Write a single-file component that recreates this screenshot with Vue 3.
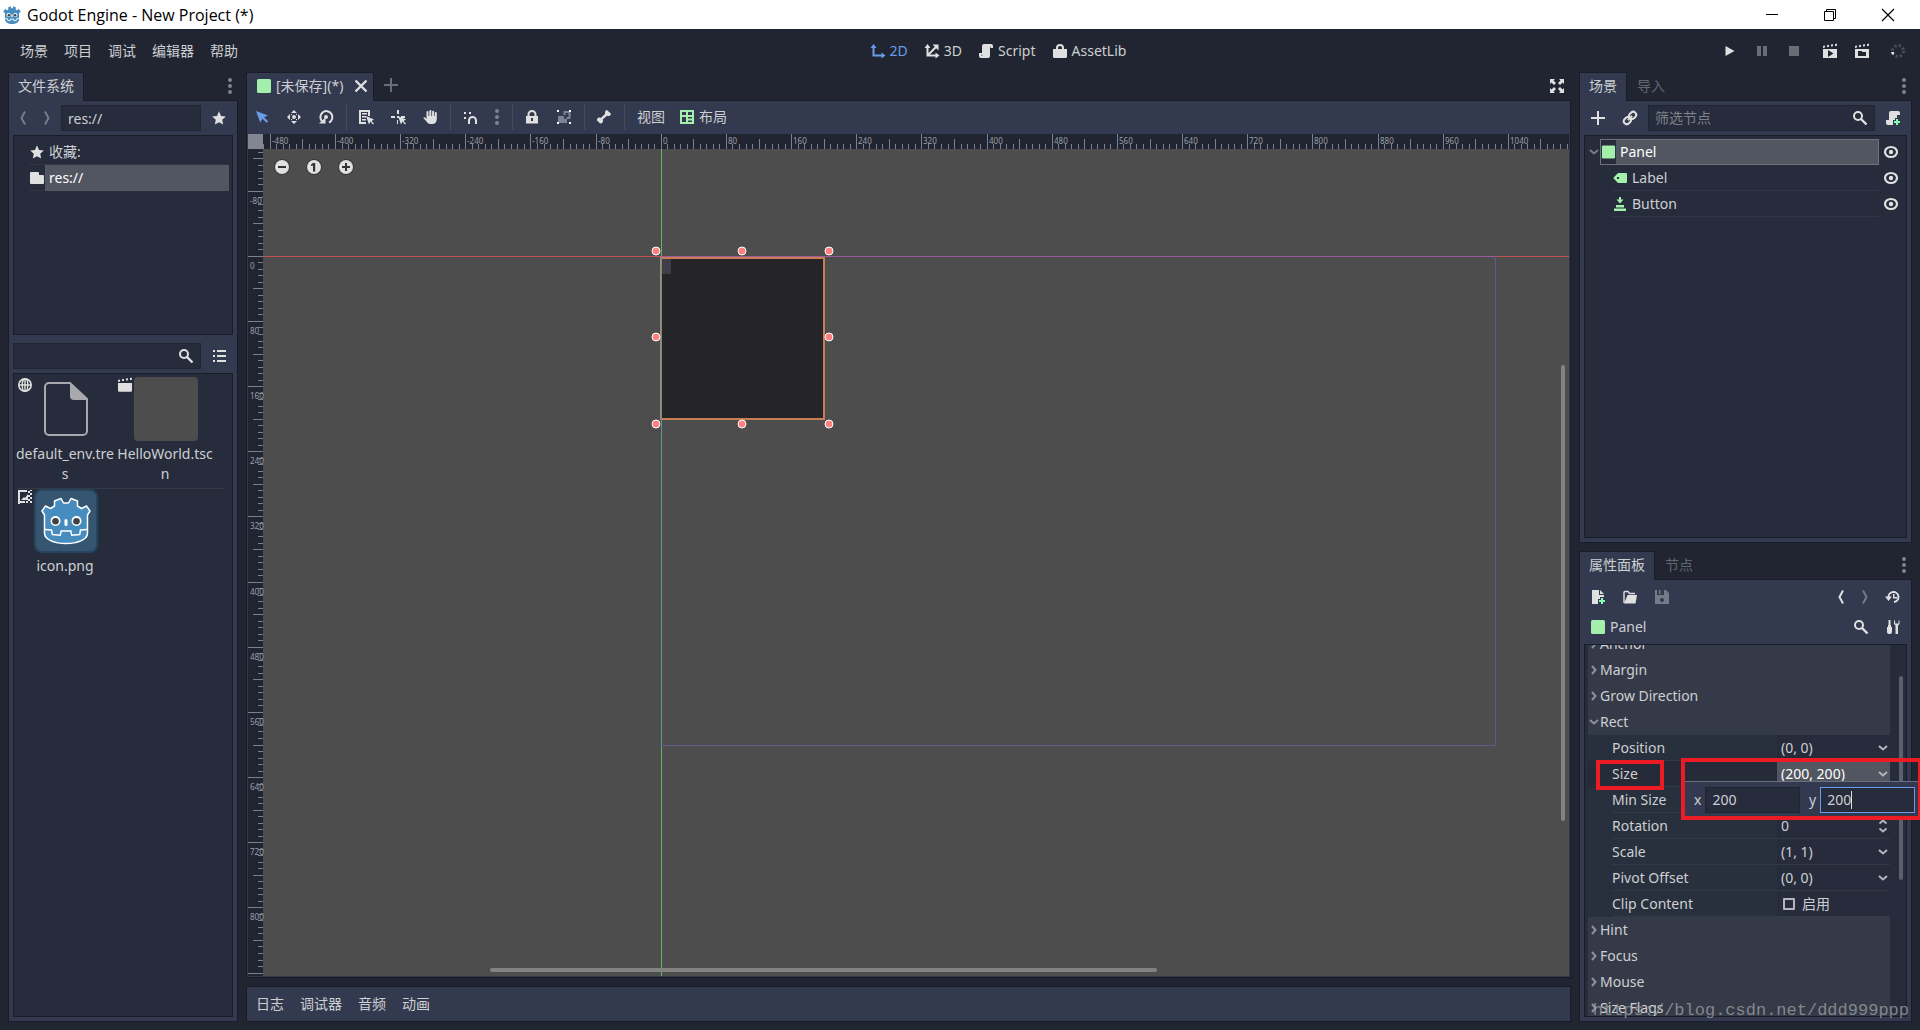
<script setup>
import { h, ref } from 'vue'

const L = (d, w = 2, c = 'currentColor') =>
  `<path d="${d}" fill="none" stroke="${c}" stroke-width="${w}"/>`
const F = (d, c = 'currentColor') => `<path d="${d}" fill="${c}"/>`

const cursor = 'M8 7l3 8.500 1.500-3 2.500 3 1-1-2.500-2.500 2.500-1.500z'
const clap = 'M1 3l2-.4v2L1 5zm4-.8l2-.4v2L5 4.200zm4-.6l2-.3v2L9 3.500zm4-.6l2-.2v2l-2 .2z'

const glyphs = {
  robot: `<g transform="scale(.25)"><path d="M9.500 44V26L4 21l6-8 6.500 4 3.500-2.500V7L28 4l2 6h4L36 4l8 3v7.500l3.500 2.500 6.500-4 6 8-5.500 5v20c0 9-11 15-22.500 15S9.500 55 9.500 44z" fill="#478cbf"/><circle cx="21" cy="32" r="6.500" fill="#fff"/><circle cx="43" cy="32" r="6.500" fill="#fff"/><circle cx="22" cy="33" r="4" fill="#414042"/><circle cx="42" cy="33" r="4" fill="#414042"/><path d="M30 30h4v8h-4z" fill="#fff"/><path d="M10 43l7 1 1 5 8 1 1-5h10l1 5 8-1 1-5 7-1" fill="none" stroke="#fff" stroke-width="3"/></g>`,
  panel: '<rect x="1" y="1" width="14" height="14" rx="1.500" fill="#a5efac"/>',
  close: L('M2.500 2.500l11 11M13.500 2.500l-11 11', 2.4),
  plus: L('M8 1v14M1 8h14', 2),
  prev: L('M10 1.500L6.500 8l3.500 6.500'),
  next: L('M6 1.500L9.500 8 6 14.500'),
  star: F('M8 1.300l2 4.600 4.800.5-3.600 3.300 1 4.900L8 12.200l-4.200 2.400 1-4.900L1.200 6.400 6 5.900z'),
  folder: F('M2 2a1 1 0 0 0-1 1v10a1 1 0 0 0 1 1h12a1 1 0 0 0 1-1V6a1 1 0 0 0-1-1h-4V3a1 1 0 0 0-1-1z'),
  search: '<circle cx="6" cy="6" r="4" fill="none" stroke="currentColor" stroke-width="2"/>' + L('M9 9l5.500 5.500', 2.4),
  list: F('M2 2h2v2H2zm4 0h9v2H6zM2 7h2v2H2zm4 0h9v2H6zM2 12h2v2H2zm4 0h9v2H6z'),
  globe: '<circle cx="8" cy="8" r="6.200" fill="none" stroke="currentColor" stroke-width="1.600"/><ellipse cx="8" cy="8" rx="2.800" ry="6.200" fill="none" stroke="currentColor" stroke-width="1.400"/>' + L('M2 8h12M8 2v12', 1.4),
  scene: F(clap) + F('M1 6h14v7.500a1.200 1.200 0 0 1-1.200 1.200H2.200A1.200 1.200 0 0 1 1 13.500z'),
  image: F('M1 1h9v2H3v9h5v2h-5v1H1zM4 11l3-3 1 1 3-4v6zM11 2h2v2h-2zM13 4h2v2h-2zM11 6h2v2h-2zM13 8h2v2h-2zM11 10h2v2h-2zM9 12h2v2H9zM13 12h2v2h-2zM13 1h2v1h-2z'),
  select: F('M2 2l4.200 11.500 2.300-3.700 4 4 1.600-1.600-4-4L14 6.500z', '#699ce8'),
  move: '<circle cx="8" cy="8" r="2" fill="currentColor"/>' + F('M8 1l3 3H5zM8 15l3-3H5zM1 8l3-3v6zM15 8l-3-3v6zM5 5h1v1H5zM10 5h1v1h-1zM5 10h1v1H5zM10 10h1v1h-1z'),
  rotate: L('M4.300 12.500A6 6 0 1 1 11 13.500') + '<circle cx="8" cy="8" r="2" fill="currentColor"/>' + F('M1 14.500h6.500V8.500z'),
  listselect: F('M1 1h11v6h-2V3H3v10h5v2H1zM4 4h5v1.500H4zM4 7h4v1.500H4zM4 10h4v1.500H4z') + F(cursor),
  pivot: F('M7 1h2v4H7zM1 7h4v2H1zM11 7h4v2h-4zM7 11h1v4H7zM7 7h2v2H7z') + F(cursor),
  hand: F('M4.500 3a1 1 0 0 1 2 0v4h.8V2a1 1 0 0 1 2 0v5h.8V2.700a1 1 0 0 1 2 0V7h.7V4a1 1 0 0 1 2 0v6c0 3-1.800 5-4.500 5H8.500c-2 0-2.800-.8-4-2.500L1.300 9c.8-1 1.800-.8 2.400 0l.8.8z'),
  snap: F('M2 3h2v2H2zM7 3h2v2H7zM2 8h2v2H2z') + L('M7 15v-3.500a3.500 3.500 0 0 1 7 0V15', 2),
  lock: F('M3.500 7V5.500a4.500 4.500 0 0 1 9 0V7H14v7.500H2V7zm2 0h5V5.500a2.500 2.500 0 0 0-5 0zM7 9v3h2V9z'),
  group: F('M2 7h6v3h3v4H2z', '#7d8392') + L('M8.500 6V3h5v6h-3', 2, '#7d8392') + F('M1 1h2v2H1zM13 1h2v2h-2zM1 13h2v2H1zM13 13h2v2h-2z', '#fff'),
  bone: F('M10 1.500c1.200-.8 2.600 0 2.700 1.400 1.800.2 2.800 2 1.700 3.300-1 1-2.400 1-3.400.5L6.700 10.500c.6 1.400.2 2.800-.8 3.600-1.300 1-2.800.2-3-1.400-1.600-.2-2.500-1.700-1.700-3 .8-1.200 2.300-1.400 3.600-.8L9.200 4.700c-.5-1.300-.2-2.500.8-3.200z'),
  layout: F('M1 1h14v14H1zm2 2v3h4V3zm6 0v3h4V3zM3 8v5h4V8zm6 0v1.500h4V8zm0 3.500V13h4v-1.500z', '#a5efac'),
  d2: L('M3.500 4v8.500H12') + F('M3.500 1l3 4h-6zM15.500 12.500l-4 3v-6z'),
  d3: L('M3.500 4v8.500H12M3.500 12.500l9-9') + F('M3.500 1l3 4h-6zM15.500 12.500l-4 3v-6zM14.500 1.500v6l-6-6z'),
  script: F('M6 1a2 2 0 0 0-2 2v7H1v3a2 2 0 0 0 2 2h7a2 2 0 0 0 2-2V5h3V3a2 2 0 0 0-2-2z') + F('M12 3.500h1V5h-1zM3 11.500h1.500V13H3z', '#8e9096'),
  asset: F('M4 6V5a4 4 0 0 1 8 0v1h3v7.500a1.500 1.500 0 0 1-1.500 1.500h-11A1.500 1.500 0 0 1 1 13.500V6zm2 0h4V5a2 2 0 0 0-4 0z'),
  play: F('M3.500 3l9 5-9 5z'),
  pause: F('M3 3h4v10H3zM9 3h4v10H9z'),
  stop: F('M3 3h10v10H3z'),
  playscene: F(clap) + F('M1 6h14v9H1zm5 1v7l5.500-3.500z'),
  playcustom: F(clap) + F('M1 6h14v9H1zm3 2v5h8V9H8V8z'),
  spinner: '<circle cx="8" cy="8" r="5.500" fill="none" stroke="#484c56" stroke-width="3" stroke-dasharray="2.300 2.020"/>' + F('M1 9h3v2.500H2z', '#e0e0e0'),
  expand: F('M1 1h5L4.500 2.500 7 5 5 7 2.500 4.500 1 6zM15 1v5l-1.500-1.500L11 7 9 5l2.500-2.500L10 1zM1 15v-5l1.500 1.500L5 9l2 2-2.500 2.500L6 15zM15 15h-5l1.500-1.500L9 11l2-2 2.500 2.500L15 10z'),
  link: '<g transform="rotate(-45 8 8)" fill="none" stroke="currentColor" stroke-width="2"><rect x="0.500" y="5" width="7.500" height="6" rx="3"/><rect x="8" y="5" width="7.500" height="6" rx="3"/><path d="M5 8h6"/></g>',
  scriptadd: F('M6 1a2 2 0 0 0-2 2v7H1v3a2 2 0 0 0 2 2h5v-5h2V8h2V5h3V3a2 2 0 0 0-2-2z') + F('M11 9h2v2h2v2h-2v2h-2v-2H9v-2h2z', '#84ffb1'),
  label: F('M6 3L1.200 8 6 13h8a1 1 0 0 0 1-1V4a1 1 0 0 0-1-1zm-1 4h2v2H5z', '#a5efac'),
  button: F('M7 1h2v2.500h2.500L8 7.500 4.500 3.500H7zM4 9h8v2.500H4zM2 12.500h12V15H2z', '#a5efac'),
  eye: '<ellipse cx="8" cy="8" rx="6" ry="5" fill="none" stroke="currentColor" stroke-width="2.200"/><circle cx="8" cy="8" r="2.200" fill="currentColor"/>',
  newres: F('M2 1h7v5h5v2h-4v2H8v5H2zM10 1l4 4h-4z') + F('M11 9h2v2h2v2h-2v2h-2v-2H9v-2h2z', '#84ffb1'),
  load: L('M2 14V3.500A1 1 0 0 1 3 2.500h3l1.500 2H13', 1.4) + F('M5.500 6H15l-1.500 8.500H2z'),
  save: F('M1 1h2v5h7V1h2l3 3v11H1zm4 0h1.500v4H5zm3 8a2 2 0 1 0 .01 0z'),
  history: L('M3.500 8.500A5 5 0 1 1 9 13', 2) + F('M0 7.500h7L3.500 12zM8 5h1.500v3H12v1.500H8z'),
  tools: F('M3.500 1h2v5h-2zM2 8h5v5a2 2 0 0 1-2 2H4a2 2 0 0 1-2-2zM3 6h3v2H3zM9 1.500v3.500l1.500 1.500V15h2.500V6.500L14.500 5V1.500h-1V4.500h-3.400V1.500z'),
  down: L('M4 6l4 3.500L12 6'),
  right: L('M6 4l3.500 4L6 12'),
  updown: L('M4.500 5.500L8 2.500l3.500 3M4.500 10.500l3.500 3 3.500-3'),
  min: L('M2 7.500h12', 1),
  restore: L('M2.500 4.500h9v9h-9zM4.500 4.500v-2h9v9h-2', 1),
  wclose: L('M2 2l12 12M14 2L2 14', 1.2),
  dots: '<circle cx="8" cy="2" r="2" fill="currentColor"/><circle cx="8" cy="8" r="2" fill="currentColor"/><circle cx="8" cy="14" r="2" fill="currentColor"/>',
  zminus: F('M4 7h8v2H4z', '#333'),
  zone: F('M7 4h2.200v8.500H7V6.500L5 7V5.500z', '#333'),
  zplus: F('M7 4h2v3h3v2H9v3H7V9H4V7h3z', '#333'),
}

const Icon = (p) =>
  h('svg', { class: 'ico', viewBox: '0 0 16 16', 'aria-hidden': 'true', innerHTML: glyphs[p.n] })
Icon.props = ['n']

const menus = ['场景', '项目', '调试', '编辑器', '帮助']
const modes = [['d2', '2D'], ['d3', '3D'], ['script', 'Script'], ['asset', 'AssetLib']]
const bottomTabs = ['日志', '调试器', '音频', '动画']
const tools = ['select', 'move', 'rotate', '|', 'listselect', 'pivot', 'hand', '|', 'snap', 'dots', '|', 'lock', 'group', '|', 'bone', '|']

const path = ref('res://')
const sizeX = ref('200')
const sizeY = ref('200')

/* Ruler geometry: one scene unit is `zoom` pixels, the origin sits at (ox, oy). */
const zoom = 0.8145
const ox = 413.3
const oy = 122.3
const makeTicks = (o, to) => {
  const out = []
  for (let u = -800; u <= to; u += 8) {
    const p = Math.floor(o + u * zoom)
    if (p >= 15) out.push({ u, p, len: u % 80 === 0 ? 15 : u % 40 === 0 ? 10 : 5 })
  }
  return out
}
const hTicks = makeTicks(ox, 1112)
const vTicks = makeTicks(oy, 880)
const major = (t, to) => t.filter((k) => k.u % 80 === 0 && k.u <= to)
const handles = [[408, 117], [494, 117], [581, 117], [408, 203], [581, 203], [408, 290], [494, 290], [581, 290]]

const rows = [
  { s: 'Anchor' }, { s: 'Margin' }, { s: 'Grow Direction' }, { s: 'Rect', open: true },
  { k: 'Position', v: '(0, 0)', i: 'down' }, { k: 'Size', v: '(200, 200)', i: 'down', on: true },
  { k: 'Min Size', v: '', i: 'down' }, { k: 'Rotation', v: '0', i: 'updown' },
  { k: 'Scale', v: '(1, 1)', i: 'down' }, { k: 'Pivot Offset', v: '(0, 0)', i: 'down' },
  { k: 'Clip Content', check: true },
  { s: 'Hint' }, { s: 'Focus' }, { s: 'Mouse' }, { s: 'Size Flags' },
]
</script>

<template>
  <div class="app">
    <header class="title">
      <Icon n="robot" class="logo" />
      <span class="caption">Godot Engine - New Project (*)</span>
      <button class="win" aria-label="Minimize"><Icon n="min" /></button>
      <button class="win" aria-label="Restore"><Icon n="restore" /></button>
      <button class="win" aria-label="Close"><Icon n="wclose" /></button>
    </header>

    <nav class="menubar">
      <div class="menus"><button v-for="m in menus" :key="m">{{ m }}</button></div>
      <div class="modes">
        <button v-for="(m, i) in modes" :key="m[1]" :class="{ blue: i === 0 }"><Icon :n="m[0]" />{{ m[1] }}</button>
      </div>
      <div class="run">
        <button aria-label="Play"><Icon n="play" /></button>
        <button class="dim" aria-label="Pause"><Icon n="pause" /></button>
        <button class="dim" aria-label="Stop"><Icon n="stop" /></button>
        <button class="wide" aria-label="Play scene"><Icon n="playscene" /></button>
        <button aria-label="Play custom scene"><Icon n="playcustom" /></button>
        <span class="spin"><Icon n="spinner" /></span>
      </div>
    </nav>

    <main class="body">
      <aside class="dock left">
        <div class="tabs">
          <button class="tab on">文件系统</button>
          <button class="more" aria-label="Dock options"><Icon n="dots" /></button>
        </div>
        <div class="panel">
          <div class="row">
            <button class="slim dim" aria-label="Back"><Icon n="prev" /></button>
            <button class="slim dim" aria-label="Forward"><Icon n="next" /></button>
            <input v-model="path" class="field grow" aria-label="Path" />
            <button class="tool" aria-label="Favorite"><Icon n="star" /></button>
          </div>
          <ul class="box fstree">
            <li><Icon n="star" /><span>收藏:</span></li>
            <li class="sel"><Icon n="folder" /><span>res://</span></li>
          </ul>
          <div class="row after">
            <label class="field grow find"><input aria-label="Search files" /><Icon n="search" /></label>
            <button class="tool" aria-label="List view"><Icon n="list" /></button>
          </div>
          <div class="box files">
            <div class="frow">
              <figure>
                <Icon n="globe" class="kind" />
                <svg class="thumb" viewBox="0 0 64 64"><path d="M36 6H15a4 4 0 0 0-4 4v44a4 4 0 0 0 4 4h34a4 4 0 0 0 4-4V22z" fill="none" stroke="#a8a9ae" stroke-width="2" /><path d="M36 6l18 17H40a4 4 0 0 1-4-4z" fill="#a8a9ae" /></svg>
                <figcaption>default_env.tres</figcaption>
              </figure>
              <figure>
                <Icon n="scene" class="kind" />
                <div class="thumb grey"></div>
                <figcaption>HelloWorld.tscn</figcaption>
              </figure>
            </div>
            <div class="frow">
              <figure>
                <Icon n="image" class="kind" />
                <svg class="thumb" viewBox="0 0 64 64">
                  <rect x="1" y="1" width="62" height="62" rx="7" fill="#355570" stroke="#25465e" stroke-width="2" />
                  <path d="M10.500 44V26L8 22l3.500-5 5 2.500 4-2.500v-5L27 9.500l2.500 4.500h5L37 9.500l6.500 2.500v5l4 2.500 5-2.500 3.500 5-2.500 4v18c0 7-10.500 10.500-21.500 10.500S10.500 51 10.500 44z" fill="#478cbf" stroke="#fff" stroke-width="1.500" stroke-linejoin="round" />
                  <circle cx="21.500" cy="32" r="5" fill="#fff" /><circle cx="42.500" cy="32" r="5" fill="#fff" />
                  <circle cx="21.500" cy="32.300" r="3.300" fill="#414042" /><circle cx="42.500" cy="32.300" r="3.300" fill="#414042" />
                  <rect x="30.500" y="30" width="3" height="7" rx="1.500" fill="#fff" />
                  <path d="M10.500 40.500l7 .5.800 4.500 8 .8.800-4.300h9.800l.8 4.300 8-.8.800-4.500 7-.5" fill="none" stroke="#fff" stroke-width="1.500" />
                </svg>
                <figcaption>icon.png</figcaption>
              </figure>
            </div>
          </div>
        </div>
      </aside>

      <section class="center">
        <div class="tabs">
          <div class="tab on file"><Icon n="panel" /><span>[未保存](*)</span><button aria-label="Close tab"><Icon n="close" /></button></div>
          <button class="addtab" aria-label="New scene"><Icon n="plus" /></button>
          <button class="full" aria-label="Distraction free"><Icon n="expand" /></button>
        </div>
        <div class="panel stage">
          <div class="toolbar">
            <template v-for="(t, i) in tools" :key="i">
              <i v-if="t === '|'" class="sep"></i>
              <button v-else :aria-label="t" :class="['tool', { narrow: t === 'dots' }]"><Icon :n="t" /></button>
            </template>
            <button class="text">视图</button>
            <button class="text lay"><Icon n="layout" />布局</button>
          </div>
          <div class="view">
            <svg class="canvas">
              <rect x="15" y="15" width="100%" height="100%" fill="#4d4d4d" />
              <rect width="15" height="15" fill="#828690" />
              <g fill="#7b808b">
                <rect v-for="t in hTicks" :key="'h' + t.u" :x="t.p" :y="15 - t.len" width="1" :height="t.len" />
                <rect v-for="t in vTicks" :key="'v' + t.u" :x="15 - t.len" :y="t.p" :width="t.len" height="1" />
              </g>
              <g class="nums">
                <text v-for="t in major(hTicks, 1040)" :key="'h' + t.u" :x="t.p + 2" y="10">{{ t.u }}</text>
                <text v-for="t in major(vTicks, 800)" :key="'v' + t.u" x="2" :y="t.p + 13">{{ t.u }}</text>
              </g>
              <rect x="413" y="123" width="163" height="163" fill="#252429" />
              <rect x="413" y="123" width="10" height="17" fill="#3f3d48" />
              <rect x="15" y="122" width="100%" height="1" fill="#bd5353" />
              <rect x="413" y="15" width="1" height="100%" fill="#62b562" />
              <rect x="413" y="122" width="834" height="1" fill="#a05a9c" />
              <rect x="1247" y="122" width="1" height="489" fill="#5d5a8e" />
              <rect x="413" y="611" width="835" height="1" fill="#5d5a8e" />
              <rect x="413" y="124" width="163" height="161" fill="none" stroke="#c87d54" stroke-width="2" />
              <rect x="413" y="123" width="1" height="488" fill="#5f959c" />
              <circle v-for="(p, i) in handles" :key="i" :cx="p[0]" :cy="p[1]" r="4" fill="#ff8080" stroke="#fff" stroke-width="1" />
            </svg>
            <div class="zoom">
              <button aria-label="Zoom out"><Icon n="zminus" /></button>
              <button aria-label="Zoom reset"><Icon n="zone" /></button>
              <button aria-label="Zoom in"><Icon n="zplus" /></button>
            </div>
            <i class="bar v"></i><i class="bar h"></i>
          </div>
        </div>
        <div class="panel bottom"><button v-for="b in bottomTabs" :key="b">{{ b }}</button></div>
      </section>

      <aside class="right">
        <div class="dock">
          <div class="tabs">
            <button class="tab on">场景</button><button class="tab">导入</button>
            <button class="more" aria-label="Dock options"><Icon n="dots" /></button>
          </div>
          <div class="panel">
            <div class="row">
              <button class="tool" aria-label="Add node"><Icon n="plus" /></button>
              <button class="tool" aria-label="Instance scene"><Icon n="link" /></button>
              <label class="field grow find"><input placeholder="筛选节点" aria-label="Filter nodes" /><Icon n="search" /></label>
              <button class="tool" aria-label="Attach script"><Icon n="scriptadd" /></button>
            </div>
            <ul class="box nodes">
              <li class="root"><Icon n="down" class="chev" /><div class="sel"><Icon n="panel" /><span>Panel</span></div><Icon n="eye" class="eye" /></li>
              <li><div class="kid"><Icon n="label" /><span>Label</span></div><Icon n="eye" class="eye" /></li>
              <li><div class="kid"><Icon n="button" /><span>Button</span></div><Icon n="eye" class="eye" /></li>
            </ul>
          </div>
        </div>

        <div class="dock insp">
          <div class="tabs">
            <button class="tab on">属性面板</button><button class="tab">节点</button>
            <button class="more" aria-label="Dock options"><Icon n="dots" /></button>
          </div>
          <div class="panel">
            <div class="row">
              <button class="tool" aria-label="New resource"><Icon n="newres" /></button>
              <button class="tool" aria-label="Load resource"><Icon n="load" /></button>
              <button class="tool dim" aria-label="Save resource"><Icon n="save" /></button>
              <span class="grow"></span>
              <button class="slim" aria-label="Previous"><Icon n="prev" /></button>
              <button class="slim dim" aria-label="Next"><Icon n="next" /></button>
              <button class="tool" aria-label="History"><Icon n="history" /></button>
            </div>
            <div class="row object">
              <Icon n="panel" /><span class="grow">Panel</span>
              <button class="tool" aria-label="Search properties"><Icon n="search" /></button>
              <button class="tool" aria-label="Object tools"><Icon n="tools" /></button>
            </div>
            <div class="box props">
              <div class="list">
                <template v-for="r in rows" :key="r.s || r.k">
                  <button v-if="r.s" class="section"><Icon :n="r.open ? 'down' : 'right'" />{{ r.s }}</button>
                  <div v-else :class="['prop', { hot: r.on }]">
                    <span class="key">{{ r.k }}</span>
                    <label v-if="r.check" class="val check"><input type="checkbox" />启用</label>
                    <button v-else class="val"><span>{{ r.v }}</span><Icon :n="r.i" /></button>
                  </div>
                </template>
              </div>
              <i class="thumbbar"></i>
            </div>
          </div>
          <div class="popup">
            <label>x<input v-model="sizeX" class="field" /></label>
            <label>y<span class="field focus"><input v-model="sizeY" :size="3" /><i class="caret"></i></span></label>
          </div>
          <i class="mark name"></i>
          <i class="mark value"></i>
        </div>
      </aside>
    </main>
    <span class="credit">https://blog.csdn.net/ddd999ppp</span>
  </div>
</template>

<style>
body { background: #202531; overflow: hidden; }
</style>

<style scoped>
.app {
  position: relative; display: flex; flex-direction: column; height: 100vh; overflow: hidden;
  background: #202531; color: #cdcfd2; font: 14px/20px "Noto Sans", "Noto Sans CJK SC", sans-serif;
}
.app * { box-sizing: border-box; }
button { display: flex; align-items: center; justify-content: center; margin: 0; padding: 0; border: 0; background: none; color: inherit; font: inherit; white-space: nowrap; }
input { margin: 0; font: inherit; color: inherit; outline: 0; }
ul { margin: 0; padding: 0; list-style: none; }
.ico { width: 16px; height: 16px; flex: none; display: block; color: #e0e0e0; }
.dim .ico { color: #757b89; }
.grow { flex: 1; min-width: 0; }

.title { display: flex; align-items: center; height: 29px; padding-right: 3px; background: #fff; color: #000; }
.logo { width: 20px; height: 20px; margin-left: 2px; }
.caption { flex: 1; padding-left: 5px; font: 16px/24px "Open Sans", sans-serif; }
.win { width: 58px; height: 29px; }
.win .ico { color: #000; }

.menubar { display: flex; align-items: center; height: 43px; padding: 0 8px 0 12px; }
.menus { display: flex; }
.menus button { padding: 0 8px; }
.modes { flex: 1; display: flex; justify-content: center; gap: 16px; padding-left: 34px; }
.modes button { gap: 4px; }
.modes .blue, .modes .blue .ico { color: #699ce8; }
.run { display: flex; align-items: center; gap: 4px; }
.run button { width: 28px; height: 28px; }
.run .wide { margin-left: 4px; }
.run .dim .ico { color: #6a6d75; }
.spin { padding: 0 6px; margin-left: 4px; }

.body { flex: 1; min-height: 0; display: flex; gap: 8px; padding: 0 8px 8px; }
.dock { display: flex; flex-direction: column; min-height: 0; }
.left { width: 230px; }
.center { flex: 1; min-width: 0; display: flex; flex-direction: column; }
.right { width: 333px; display: flex; flex-direction: column; gap: 8px; }
.right .dock { flex: 1; }

.tabs { display: flex; height: 28px; flex: none; }
.tab { height: 29px; padding: 0 9px 2px; border: 1px solid transparent; border-bottom: 0; color: #62666f; position: relative; }
.tab.on { background: #333a4f; border-color: #191d27; color: #cdcfd2; }
.more { margin-left: auto; width: 16px; }
.more .ico, .narrow .ico { color: #7f848e; }
.file { display: flex; align-items: center; gap: 4px; padding: 0 4px 2px 9px; }
.file button { margin-left: 6px; }
.addtab { width: 34px; padding-bottom: 2px; }
.addtab .ico { color: #6b6e74; }
.full { margin-left: auto; width: 28px; }

.panel { flex: 1; min-height: 0; display: flex; flex-direction: column; gap: 4px; padding: 4px; background: #333a4f; border: 1px solid #191d27; }
.row { display: flex; align-items: center; gap: 4px; height: 26px; flex: none; }
.after { margin-top: 4px; }
.tool { width: 28px; height: 26px; }
.slim { width: 20px; height: 26px; }
.narrow { width: 18px; }
.field { height: 26px; padding: 0 6px; border: 1px solid #202531; background: #262c3b; }
.find { display: flex; align-items: center; }
.find input { flex: 1; min-width: 0; border: 0; background: none; padding: 0; }
.find input::placeholder { color: #7c808a; opacity: 1; }
.box { background: #262c3b; border: 1px solid #191d27; }

.fstree { height: 200px; padding: 3px 3px 3px 15px; }
.fstree li { display: flex; align-items: center; height: 26px; border-bottom: 1px solid #303646; }
.fstree span { flex: 1; padding-left: 4px; line-height: 26px; margin-bottom: -1px; }
.fstree .sel span { background: #525661; color: #fff; }

.files { flex: 1; min-height: 0; padding: 3px 7px 3px 3px; }
.frow { display: flex; gap: 4px; }
.frow + .frow { border-top: 1px solid #343946; }
figure { position: relative; width: 96px; height: 111px; margin: 0; display: flex; flex-direction: column; }
figcaption { margin: 3px -2px 0; text-align: center; word-break: break-all; }
.kind { position: absolute; left: 0; top: 0; }
.thumb { width: 64px; height: 64px; flex: none; margin-left: 17px; }
.grey { background: #4d4d4d; border-radius: 4px; }

.stage { gap: 0; padding: 0 1px 1px; }
.toolbar { display: flex; align-items: center; gap: 4px; height: 33px; padding-bottom: 2px; flex: none; }
.sep { width: 4px; height: 26px; display: flex; justify-content: center; }
.sep::before { content: ""; width: 1px; background: #464c5e; }
.text { padding: 0 7px; }
.lay { gap: 4px; padding: 0 3px; }
.view { position: relative; flex: 1; min-height: 0; }
.canvas { position: absolute; inset: 0; width: 100%; height: 100%; background: #202531; overflow: hidden; }
.nums { font-size: 8px; fill: #9b9fa7; }
.zoom { position: absolute; left: 27px; top: 26px; display: flex; gap: 18px; }
.zoom button { width: 14px; height: 14px; border-radius: 50%; background: #e0e0e0; box-shadow: 0 0 0 1px #383838; }
.bar { position: absolute; background: #828282; border-radius: 2px; }
.bar.v { right: 4px; top: 231px; bottom: 155px; width: 4px; }
.bar.h { left: 242px; right: 412px; bottom: 4px; height: 4px; }
.bottom { flex: none; flex-direction: row; align-items: center; gap: 0; height: 36px; margin-top: 8px; padding: 0 1px; }
.bottom button { padding: 0 8px; }

.nodes { flex: 1; padding: 3px; }
.nodes li { display: flex; align-items: center; height: 26px; padding-left: 24px; }
.nodes .root { padding-left: 0; }
.nodes .chev { margin: 0 -2px; color: #757b89; }
.nodes .sel { flex: 1; display: flex; align-items: center; height: 26px; border: 1px solid #6d727f; background: #525661; color: #fff; }
.nodes .sel .ico { background: #262c3b; height: 24px; width: 15px; }
.nodes span { padding-left: 4px; }
.kid { flex: 1; display: flex; align-items: center; height: 26px; border-bottom: 1px solid #303646; }
.eye { margin: 0 4px; }

.insp { position: relative; }
.object { padding-left: 6px; }
.object span { line-height: 26px; }
.props { flex: 1; min-height: 0; overflow: hidden; position: relative; padding: 0 16px 0 3px; }
.list { margin-top: -14px; }
.section { width: 100%; height: 26px; justify-content: flex-start; background: #353a48; }
.section .ico { margin: 0 -2px; color: #8d919a; }
.prop { display: flex; height: 26px; background: #29303d; }
.key { flex: 1; margin-left: 24px; line-height: 25px; border-bottom: 1px solid #323846; }
.val { width: 113px; justify-content: space-between; padding: 0 0 0 4px; background: #262c3b; border-bottom: 1px solid #323846; }
.val .ico { margin-right: -1px; color: #b3b6bb; }
.hot { background: #252b38; }
.hot .val { background: #525661; color: #fff; }
.check { display: flex; align-items: center; justify-content: flex-start; gap: 7px; padding-left: 6px; }
.check input { appearance: none; width: 12px; height: 12px; border: 2px solid #b3b6bb; border-radius: 1px; }
.thumbbar { position: absolute; right: 3px; top: 31px; height: 204px; width: 4px; border-radius: 2px; background: #5b606d; }

.popup { position: absolute; top: 230px; right: -8px; width: 235px; height: 36px; display: flex; gap: 9px; padding: 5px 5px 5px 9px; background: #333a4f; border-top: 1px solid #6a6f7c; }
.popup label { flex: 1; display: flex; align-items: center; gap: 4px; min-width: 0; }
.popup .field { flex: 1; min-width: 0; }
.popup .focus { display: flex; align-items: center; border-color: #699ce8; }
.focus input { width: 24px; padding: 0; border: 0; background: none; }
.caret { width: 1px; height: 18px; background: #e0e0e0; }
.mark { position: absolute; border: 4px solid #ed1c24; }
.mark.name { left: 17px; top: 209px; width: 68px; height: 30px; }
.mark.value { left: 102px; right: -10px; top: 207px; height: 62px; }
.credit { position: absolute; right: 11px; bottom: 8px; font: 17px/22px "Liberation Mono", monospace; color: rgba(160, 162, 165, .75); pointer-events: none; }
</style>
